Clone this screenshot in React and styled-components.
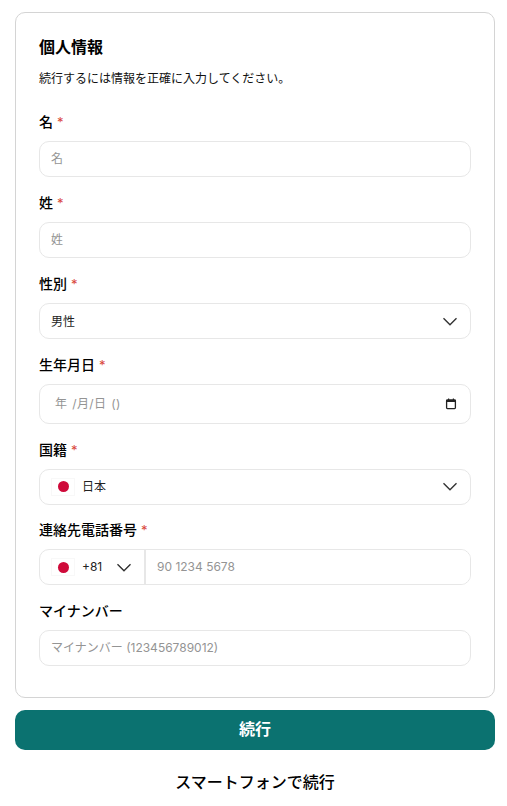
import * as React from 'react';
import styled, { createGlobalStyle } from 'styled-components';

const GlobalStyle = createGlobalStyle`
  html, body {
    margin: 0;
    background: #fff;
  }
  * {
    box-sizing: border-box;
  }
  body {
    font-family: Inter, "Noto Sans CJK JP", sans-serif;
    color: #000;
  }
`;

const Page = styled.div`
  width: 507px;
  height: 806px;
  padding: 12px 12px 0 15px;
  overflow: hidden;
`;

const Card = styled.form`
  height: 686px;
  padding: 22px 23px 0;
  border: 1px solid #d4d4d4;
  border-radius: 10px;
  background: #fff;
`;

const Title = styled.h2`
  margin: 0;
  font-size: 16px;
  line-height: 24px;
  font-weight: 700;
`;

const Subtitle = styled.p`
  margin: 9px 0 22.45px;
  font-size: 12px;
  line-height: 22px;
  color: #111;
`;

const Field = styled.div`
  display: flex;
  flex-direction: column;
  gap: 9px;
  margin-bottom: 15.8px;
`;

const Label = styled.label`
  font-size: 14px;
  line-height: 20px;
  font-weight: 500;
`;

const Required = styled.span`
  margin-left: 4px;
  color: #d9463a;
  font-size: 13px;
  font-weight: 400;
`;

const TextInput = styled.input`
  width: 100%;
  height: 36px;
  padding: 0 11px 2px;
  border: 1px solid #e7e7e7;
  border-radius: 10px;
  background: #fff;
  font: 400 12px Inter, "Noto Sans CJK JP", sans-serif;
  outline: none;

  &::placeholder {
    color: #949494;
    opacity: 1;
  }
`;

const SelectBox = styled.div`
  display: flex;
  align-items: center;
  height: ${(p) => (p.$tall ? '40px' : '36px')};
  padding: 0 12px 0 11px;
  border: 1px solid #e7e7e7;
  border-radius: 10px;
  font-size: 12px;
  color: #222;
`;

const Grow = styled.span`
  flex: 1;
  padding-bottom: 2px;
`;

const DateText = styled(Grow)`
  padding-left: 4px;
  color: #949494;
  letter-spacing: 0.4px;
  word-spacing: 1px;
`;

const Flag = styled.span`
  display: flex;
  flex: none;
  align-items: center;
  justify-content: center;
  width: 24px;
  height: 18px;
  margin-right: 7px;
  border: 1px solid #f8f8f8;

  &::after {
    content: '';
    width: 11px;
    height: 11px;
    border-radius: 50%;
    background: #cf0a3a;
  }
`;

const Arrow = () => (
  <svg width="16" height="9" viewBox="0 0 16 9" fill="none">
    <path d="M1.5 1.2 8 7.7l6.5-6.5" stroke="#333" strokeWidth="1.4" />
  </svg>
);

const CalendarIcon = () => (
  <svg width="14" height="14" viewBox="0 0 14 14" fill="none">
    <rect x="2.6" y="3" width="8.8" height="8.6" rx=".8" stroke="#222" strokeWidth="1.3" />
    <rect x="2.6" y="3" width="8.8" height="2" fill="#222" />
    <path d="M4.6 1.4v2M9.4 1.4v2" stroke="#222" strokeWidth="1.2" />
  </svg>
);

const PhoneBox = styled.div`
  display: flex;
  height: 36px;
  border: 1px solid #e7e7e7;
  border-radius: 10px;
  overflow: hidden;
`;

const DialCode = styled.div`
  display: flex;
  flex: none;
  align-items: center;
  width: 106px;
  padding-left: 11px;
  border-right: 2px solid #e7e7e7;
  font-size: 12px;
  color: #222;
`;

const DialText = styled.span`
  width: 34px;
  padding-bottom: 2px;
`;

const PhoneInput = styled(TextInput)`
  flex: 1;
  height: 100%;
  border: none;
  border-radius: 0;
`;

const PrimaryButton = styled.button`
  display: block;
  width: 480px;
  height: 40px;
  margin-top: 12px;
  padding: 0 0 5px;
  border: none;
  border-radius: 10px;
  background: #0b7270;
  color: #fff;
  font: 700 16px Inter, "Noto Sans CJK JP", sans-serif;
`;

const SecondaryLink = styled.a`
  display: block;
  width: 480px;
  margin-top: 20px;
  font-size: 16px;
  line-height: 24px;
  font-weight: 500;
  text-align: center;
  color: #000;
`;

const RequiredLabel = ({ children }) => (
  <Label>
    {children}
    <Required>*</Required>
  </Label>
);

export default function App() {
  return (
    <Page>
      <GlobalStyle />
      <Card>
        <Title>個人情報</Title>
        <Subtitle>続行するには情報を正確に入力してください。</Subtitle>
        <Field>
          <RequiredLabel>名</RequiredLabel>
          <TextInput placeholder="名" />
        </Field>
        <Field>
          <RequiredLabel>姓</RequiredLabel>
          <TextInput placeholder="姓" />
        </Field>
        <Field>
          <RequiredLabel>性別</RequiredLabel>
          <SelectBox>
            <Grow>男性</Grow>
            <Arrow />
          </SelectBox>
        </Field>
        <Field>
          <RequiredLabel>生年月日</RequiredLabel>
          <SelectBox $tall>
            <DateText>年 /月/日 ()</DateText>
            <CalendarIcon />
          </SelectBox>
        </Field>
        <Field>
          <RequiredLabel>国籍</RequiredLabel>
          <SelectBox>
            <Flag />
            <Grow>日本</Grow>
            <Arrow />
          </SelectBox>
        </Field>
        <Field>
          <RequiredLabel>連絡先電話番号</RequiredLabel>
          <PhoneBox>
            <DialCode>
              <Flag />
              <DialText>+81</DialText>
              <Arrow />
            </DialCode>
            <PhoneInput placeholder="90 1234 5678" />
          </PhoneBox>
        </Field>
        <Field>
          <Label>マイナンバー</Label>
          <TextInput placeholder="マイナンバー (123456789012)" />
        </Field>
      </Card>
      <PrimaryButton type="button">続行</PrimaryButton>
      <SecondaryLink>スマートフォンで続行</SecondaryLink>
    </Page>
  );
}
